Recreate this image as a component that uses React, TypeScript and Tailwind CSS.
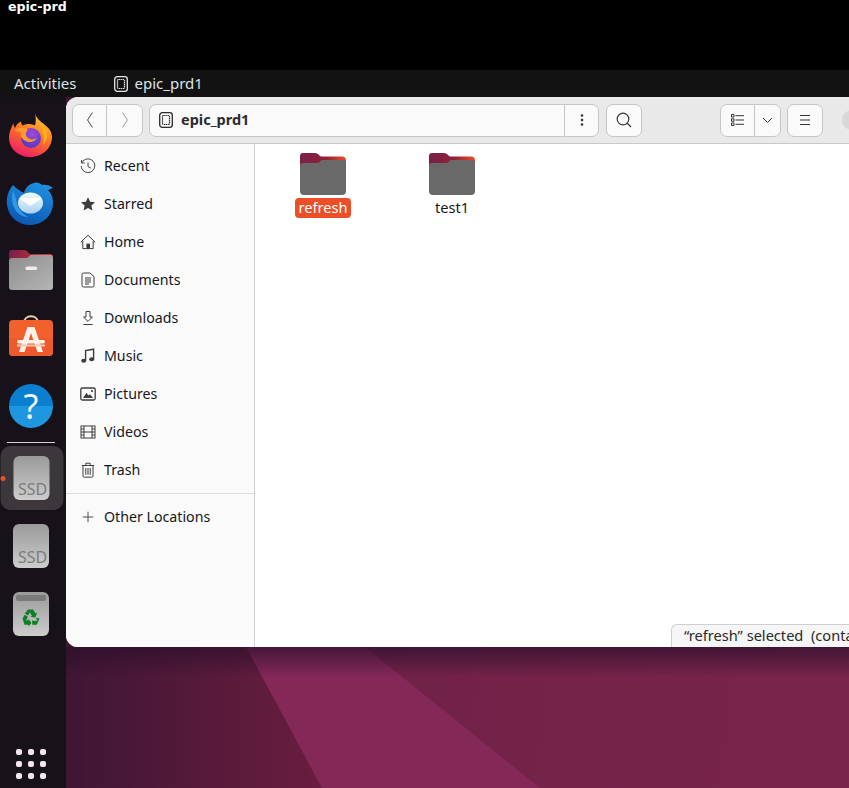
import { ReactNode } from 'react';

const font = { sans: 'font-["Noto_Sans",sans-serif]' };

const Glyph = ({ children, size = 16, className = '' }: { children: ReactNode; size?: number; className?: string }) => (
    <svg width={size} height={size} viewBox="0 0 16 16" fill="none" stroke="currentColor" strokeWidth="1" className={className}>
        {children}
    </svg>
);

const ChipIcon = ({ className = '' }: { className?: string }) => (
    <svg width="14" height="16" viewBox="0 0 14 16" fill="none" stroke="currentColor" className={className}>
        <rect x="0.7" y="0.7" width="12.6" height="14.6" rx="2.6" strokeWidth="1.3" />
        <rect x="3.5" y="3.5" width="7" height="9" rx="1" strokeWidth="1.2" strokeDasharray="1.4 0.6" />
    </svg>
);

const places: { label: string; icon: ReactNode }[] = [
    {
        label: 'Recent',
        icon: (
            <Glyph>
                <path d="M2 4.5A6.8 6.8 0 1 1 1.2 8" />
                <path d="M1.6 2v3h3M8 4.5V8.5l2.8 1.6" />
            </Glyph>
        ),
    },
    {
        label: 'Starred',
        icon: (
            <Glyph>
                <path d="M8 1.2l2.1 4.5 4.9.6-3.6 3.3 1 4.9L8 12.1l-4.4 2.4 1-4.9L1 6.3l4.9-.6z" fill="currentColor" stroke="none" />
            </Glyph>
        ),
    },
    {
        label: 'Home',
        icon: (
            <Glyph>
                <path d="M.8 8.2 8 1.2l7.2 7M2.8 7v7.6h10.4V7" />
                <rect x="6.4" y="9.6" width="3.6" height="5" fill="currentColor" stroke="none" />
            </Glyph>
        ),
    },
    {
        label: 'Documents',
        icon: (
            <Glyph>
                <path d="M2 2.5a1.5 1.5 0 0 1 1.500-1.500h6.500l4 3.500v9a1.500 1.500 0 0 1-1.500 1.500h-9A1.500 1.500 0 0 1 2 13.500z" />
                <path d="M5 6h6M5 8h6M5 10h6M5 12h4" />
            </Glyph>
        ),
    },
    {
        label: 'Downloads',
        icon: (
            <Glyph>
                <path d="M6 1.5h4V7h2.4L8 11.4 3.6 7H6zM3.4 14.5h9.2" />
            </Glyph>
        ),
    },
    {
        label: 'Music',
        icon: (
            <Glyph>
                <path d="M5.6 12.5V2.6l8-1.4v9.8" strokeWidth="1.4" />
                <ellipse cx="3.7" cy="12.8" rx="2.5" ry="2" fill="currentColor" stroke="none" />
                <ellipse cx="11.7" cy="11.3" rx="2.5" ry="2" fill="currentColor" stroke="none" />
            </Glyph>
        ),
    },
    {
        label: 'Pictures',
        icon: (
            <Glyph>
                <rect x="0.8" y="2" width="14.4" height="12" rx="1.5" strokeWidth="1.3" />
                <path d="M3 12l3.4-5 2.2 2.6 1.4-1.4 3 3.8z" fill="currentColor" stroke="none" />
                <circle cx="12" cy="5" r="1.1" fill="currentColor" stroke="none" />
            </Glyph>
        ),
    },
    {
        label: 'Videos',
        icon: (
            <Glyph>
                <rect x="1" y="2" width="14" height="12" />
                <path d="M4 2v12M12 2v12M4 8h8M1 5h3M1 8h3M1 11h3M12 5h3M12 8h3M12 11h3" />
            </Glyph>
        ),
    },
    {
        label: 'Trash',
        icon: (
            <Glyph>
                <path d="M1.8 3.5h12.4M5.8 3.5V1.2h4.4v2.3M3 3.5v10.3A1.4 1.4 0 0 0 4.4 15.2h7.2a1.4 1.4 0 0 0 1.4-1.4V3.5" />
                <path d="M5.8 6v6.8M8 6v6.8M10.2 6v6.8" />
            </Glyph>
        ),
    },
];

const FolderIcon = () => (
    <svg width="46" height="42" viewBox="0 0 46 42">
        <defs>
            <linearGradient id="folderTab" x1="0" y1="0" x2="1" y2="0">
                <stop offset="0%" stopColor="#7a1f48" />
                <stop offset="55%" stopColor="#8f2238" />
                <stop offset="100%" stopColor="#ef4a25" />
            </linearGradient>
        </defs>
        <path d="M3 0h12c2 0 3 1 4 2 1 1 2 1.500 3.500 1.500H42a4 4 0 0 1 4 4v8H0V3a3 3 0 0 1 3-3z" fill="url(#folderTab)" />
        <path d="M3 10h13c2 0 3-.6 4-1.600C21 7.400 22 7 23.500 7H43a3 3 0 0 1 3 3v28a4 4 0 0 1-4 4H4a4 4 0 0 1-4-4V13a3 3 0 0 1 3-3z" fill="#696969" />
    </svg>
);

const FileItem = ({ name, selected = false }: { name: string; selected?: boolean }) => (
    <div className="flex w-[58px] flex-col items-center">
        <FolderIcon />
        <span className={`mt-[3px] flex h-5 items-center rounded-[4px] px-[4px] text-[14.6px] ${selected ? 'bg-[#ea4f27] text-white' : 'text-[#15181d]'}`}>
            {name}
        </span>
    </div>
);

const Firefox = () => (
    <svg width="44" height="44" viewBox="0 0 44 44">
        <defs>
            <linearGradient id="ffBody" x1="0.75" y1="0" x2="0.3" y2="1">
                <stop offset="0%" stopColor="#ffd23c" />
                <stop offset="45%" stopColor="#ff7a1f" />
                <stop offset="100%" stopColor="#f0196a" />
            </linearGradient>
            <radialGradient id="ffGlobe" cx="0.55" cy="0.3" r="0.8">
                <stop offset="0%" stopColor="#a04cd8" />
                <stop offset="100%" stopColor="#4a33c8" />
            </radialGradient>
        </defs>
        <path d="M26 0c1 5 5 8 10 12 4 3 7 7 7 12 0 11-9.500 20-21.500 20S0 36 0 24.500C0 20 1.500 16.500 4.500 10c0 2 .5 4 1.500 5 1-3 3-5 6-6.500 0 2 .5 3 2 4 3-2 8-2 12 0C27 9 27 4 26 0z" fill="url(#ffBody)" />
        <circle cx="22" cy="25" r="10" fill="url(#ffGlobe)" />
        <path d="M6 17c4-3 9-3 13 0 -2 2-3 4-1 7 2 3 7 3 10 1-3 5-9 5-13 2-3-2-4-5-3-8-2-.5-4 0-6-2z" fill="#ff9a2c" />
        <path d="M28 9c7 2 11 8 10 16-1 3-2 5-4 7 2-8 0-17-6-23z" fill="#ffb01f" />
    </svg>
);

const Thunderbird = () => (
    <svg width="48" height="48" viewBox="0 0 48 48">
        <defs>
            <linearGradient id="tbBody" x1="0.7" y1="0" x2="0.3" y2="1">
                <stop offset="0%" stopColor="#1f8fe0" />
                <stop offset="100%" stopColor="#0a56b0" />
            </linearGradient>
            <linearGradient id="tbMail" x1="0" y1="0" x2="0" y2="1">
                <stop offset="0%" stopColor="#f4faff" />
                <stop offset="100%" stopColor="#a9d2f2" />
            </linearGradient>
        </defs>
        <path d="M7 7c-5 6-7 13-6 20 1.500 12 11 20 23 20s23-9 23-22c0-6-2-10-5-13l5-2c-3-3-8-4-11-3-2-2-5-3-8-2-5 1-9 5-10 10-4-2-7-4-11-8z" fill="url(#tbBody)" />
        <path d="M7 13c-2 7-1 15 4 21 3 3 7 5 11 5-6-4-10-8-11-14-1-4-2-8-4-12z" fill="#2f9be8" />
        <ellipse cx="24.500" cy="25" rx="12.500" ry="10.500" fill="url(#tbMail)" />
        <path d="M13 20l11.500 8L36 20" fill="#fff" />
    </svg>
);

const FilesApp = () => (
    <svg width="44" height="40" viewBox="0 0 44 40">
        <defs>
            <linearGradient id="filesTab" x1="0" y1="0" x2="1" y2="0">
                <stop offset="0%" stopColor="#7c1d4c" />
                <stop offset="100%" stopColor="#d83c2a" />
            </linearGradient>
            <linearGradient id="filesBody" x1="0" y1="0" x2="1" y2="1">
                <stop offset="0%" stopColor="#8d8d8d" />
                <stop offset="100%" stopColor="#b5b5b5" />
            </linearGradient>
        </defs>
        <path d="M3 0h12c2 0 3 1 4 2.500 1 1 2 1.500 3.500 1.500H41a3 3 0 0 1 3 3v8H0V3a3 3 0 0 1 3-3z" fill="url(#filesTab)" />
        <path d="M3 8h13c2 0 3-.6 4-1.600C21 5.400 22 5 23.500 5H41a3 3 0 0 1 3 3v29a3 3 0 0 1-3 3H3a3 3 0 0 1-3-3V11a3 3 0 0 1 3-3z" fill="url(#filesBody)" />
        <rect x="16.500" y="16.500" width="11.500" height="3.500" rx="1.500" fill="#f1eee9" />
    </svg>
);

const AppStore = () => (
    <svg width="44" height="44" viewBox="0 0 44 44">
        <path d="M15 10c0-9 14-9 14 0" fill="none" stroke="#f4d6a6" strokeWidth="2" />
        <rect x="0" y="7" width="44" height="36" rx="4" fill="#f2602c" />
        <path d="M0 25h44v14a4 4 0 0 1-4 4H4a4 4 0 0 1-4-4z" fill="#ee5a2d" />
        <path d="M18.500 14h7l8.500 25h-5.500L22 20l-6.500 19H10z" fill="#fdf1e8" />
        <rect x="8" y="27" width="28" height="3.500" rx="1.700" fill="#fdf1e8" />
        <rect x="8" y="31.500" width="28" height="2" fill="#f3c9b4" />
    </svg>
);

const HelpApp = () => (
    <div className="flex h-11 w-11 items-center justify-center rounded-full bg-gradient-to-b from-[#0a7fd0] from-50% to-[#1f97e0] to-50%">
        <span className={`text-[34px] leading-[44px] text-[#f4f8fc] ${font.sans}`}>?</span>
    </div>
);

const DriveApp = ({ kind }: { kind: 'ssd' | 'trash' }) => (
    <div className="relative flex h-11 w-9 flex-col items-center overflow-hidden rounded-[6px] bg-gradient-to-b from-[#9a9a9a] to-[#cdcdcd]">
        {kind === 'ssd' ? (
            <span className="absolute bottom-[3px] left-[5px] text-[16px] leading-none text-[#7c7c7c]">SSD</span>
        ) : (
            <>
                <div className="mt-[3px] h-[6px] w-[30px] rounded-[2px] bg-[#7a7a7a]" />
                <svg width="20" height="20" viewBox="0 0 20 20" className="mt-[7px]" fill="#0d7f24">
                    <path d="M7 1.500h5l2.500 4 1.800-1-2 5-5-.8 1.700-1L8.800 4.500 7 7.500 3.800 5.500z" />
                    <path d="M1.500 10.500l2.200-3.700 3.300 2-2 3.500h2.500v-1.500L10.500 15l-3 3.500v-1.800H3.500z" />
                    <path d="M18.500 10.500l-2.700 6.200H11.500v1.800L11 13l.5-1.500v1.200h5l-1.700-3z" />
                </svg>
            </>
        )}
    </div>
);

const Dock = () => (
    <aside className="flex w-[66px] shrink-0 flex-col items-center bg-[#17111a]">
        <div className="mt-[16px] -ml-[5px]"><Firefox /></div>
        <div className="mt-[21px] -ml-[6px]"><Thunderbird /></div>
        <div className="mt-[24px] -ml-[4px]"><FilesApp /></div>
        <div className="mt-[23px] -ml-[4px]"><AppStore /></div>
        <div className="mt-[27px] -ml-[4px]"><HelpApp /></div>
        <div className="mt-[14px] h-px w-[48px] -translate-x-[2px] bg-[#d4d0d2]" />
        <div className="relative mt-[3px] flex h-16 w-[63px] -translate-x-[1.500px] items-center justify-center rounded-[10px] bg-[#3b373b] pr-px">
            <DriveApp kind="ssd" />
            <div className="absolute left-0 top-[30px] h-[5px] w-[5px] rounded-full bg-[#e9512a]" />
        </div>
        <div className="mt-[14px] -ml-[4px]"><DriveApp kind="ssd" /></div>
        <div className="mt-[24px] -ml-[4px]"><DriveApp kind="trash" /></div>
        <div className="mt-[113px] -ml-[4px] grid grid-cols-3 gap-x-[6px] gap-y-[6px]">
            {Array.from({ length: 9 }).map((_, i) => (
                <div key={i} className="h-[6px] w-[6px] rounded-[2px] bg-[#f4e6ee]" />
            ))}
        </div>
    </aside>
);

const btn = 'flex h-[33px] items-center justify-center border border-[#c6c6c6] bg-[#fafafa] text-[#3a3a3a]';

const Toolbar = () => (
    <header className="flex h-[47px] items-center border-b border-[#c9c9c9] bg-[#e9e9e9] pl-[6px]">
        <div className={`${btn} w-[35px] rounded-l-[7px]`}>
            <svg width="10" height="18" viewBox="0 0 10 18" fill="none" stroke="#4a4a4a"><path d="M7.500 1.500 2.500 9l5 7.500" /></svg>
        </div>
        <div className={`${btn} -ml-px w-[37px] rounded-r-[7px]`}>
            <svg width="10" height="18" viewBox="0 0 10 18" fill="none" stroke="#9a9a9a"><path d="M2.500 1.500 7.500 9l-5 7.500" /></svg>
        </div>
        <div className={`${btn} ml-[6px] w-[416px] justify-start rounded-l-[7px] bg-[#f1f1f1] pl-[9px]`}>
            <ChipIcon className="text-[#2b2b2b]" />
            <span className="ml-2 text-[14.5px] font-bold text-[#2c2c2c]">epic_prd1</span>
        </div>
        <div className={`${btn} -ml-px w-[35px] rounded-r-[7px]`}>
            <svg width="4" height="12" viewBox="0 0 4 12" fill="#333"><circle cx="2" cy="1.500" r="1.300" /><circle cx="2" cy="6" r="1.300" /><circle cx="2" cy="10.500" r="1.300" /></svg>
        </div>
        <div className={`${btn} ml-[7px] w-[36px] rounded-[7px]`}>
            <svg width="16" height="16" viewBox="0 0 16 16" fill="none" stroke="#3a3a3a" strokeWidth="1.200"><circle cx="7" cy="7" r="5.800" /><path d="M11 11l4 4" /></svg>
        </div>
        <div className={`${btn} ml-[78px] w-[35px] rounded-l-[7px]`}>
            <svg width="13" height="12" viewBox="0 0 13 12" fill="none" stroke="#333"><path d="M.5.500h2.500v2.500H.5zM.5 4.800h2.500v2.500H.5zM.5 9h2.500v2.500H.5zM4.500 1.700H13M4.500 6H13M4.500 10.300H13" /></svg>
        </div>
        <div className={`${btn} -ml-px w-[27px] rounded-r-[7px]`}>
            <svg width="11" height="7" viewBox="0 0 11 7" fill="none" stroke="#333"><path d="M1 1l4.500 4.500L10 1" /></svg>
        </div>
        <div className={`${btn} ml-[6px] w-[36px] rounded-[7px]`}>
            <svg width="12" height="10" viewBox="0 0 12 10" fill="none" stroke="#333"><path d="M1 .500h10M1 5h10M1 9.500h10" /></svg>
        </div>
        <div className="ml-[19px] h-[20px] w-[20px] shrink-0 rounded-full bg-[#d8d8d8]" />
    </header>
);

const Sidebar = () => (
    <nav className="flex w-[189px] shrink-0 flex-col border-r border-[#d0d0d0] bg-[#fafafa] pt-[3px]">
        {places.map((p) => (
            <div key={p.label} className="flex h-[38px] items-center pl-[14px] text-[#15181d]">
                <span className="flex w-4 justify-center text-[#3d3d3d]">{p.icon}</span>
                <span className="ml-[8px] text-[14.2px]">{p.label}</span>
            </div>
        ))}
        <div className="mt-[4px] border-t border-[#dcdcdc]" />
        <div className="flex h-[46px] items-center pl-[14px] text-[#15181d]">
            <span className="flex w-4 justify-center text-[#3d3d3d]">
                <Glyph size={14}><path d="M8 2v12M2 8h12" /></Glyph>
            </span>
            <span className="ml-[8px] text-[14.2px]">Other Locations</span>
        </div>
    </nav>
);

const FilesWindow = () => (
    <div className="relative z-10 flex h-[550px] w-[800px] shrink-0 flex-col overflow-hidden rounded-l-[12px] bg-white">
        <Toolbar />
        <div className="flex flex-1">
            <Sidebar />
            <main className="relative flex flex-1 gap-[71px] bg-white pl-[39px] pt-[9px]">
                <FileItem name="refresh" selected />
                <FileItem name="test1" />
                <div className="absolute left-[416px] top-[480px] flex h-[23px] w-[300px] items-center whitespace-pre rounded-tl-[6px] border-l border-t border-[#cfcfcf] bg-[#f6f6f6] pl-[12px] text-[14.6px] text-[#2a2a2a]">
                    {'“refresh” selected  (containing 0 items)'}
                </div>
            </main>
        </div>
    </div>
);

const Wallpaper = () => (
    <svg className="absolute inset-0 h-full w-full" viewBox="0 0 783 691" preserveAspectRatio="none">
        <defs>
            <linearGradient id="wallLeft" x1="0" y1="0" x2="1" y2="0">
                <stop offset="0%" stopColor="#3f1634" />
                <stop offset="100%" stopColor="#6a1d3f" />
            </linearGradient>
            <linearGradient id="wallRight" x1="0" y1="0" x2="1" y2="0.100">
                <stop offset="0%" stopColor="#6a2044" />
                <stop offset="100%" stopColor="#78244b" />
            </linearGradient>
            <linearGradient id="wallShade" x1="0" y1="0" x2="0" y2="1">
                <stop offset="0%" stopColor="#2a0f2a" stopOpacity="0.7" />
                <stop offset="100%" stopColor="#2a0f2a" stopOpacity="0" />
            </linearGradient>
        </defs>
        <rect width="783" height="691" fill="url(#wallRight)" />
        <polygon points="0,0 255,0 256,691 0,691" fill="url(#wallLeft)" />
        <polygon points="180,550 299,550 474,691 256,691" fill="#842858" />
        <rect y="550" width="783" height="30" fill="url(#wallShade)" />
    </svg>
);

export default function App() {
    return (
        <div className={`flex h-[788px] w-[849px] flex-col overflow-hidden bg-black ${font.sans}`}>
            <div className="h-[70px] shrink-0 pl-[8px] font-['DejaVu_Sans',sans-serif] text-[12.6px] font-bold leading-[13px] text-white">
                epic-prd
            </div>
            <div className="flex h-[27px] shrink-0 items-center bg-[#121212] text-[15px] text-[#dfe3e8]">
                <span className="ml-[14px]">Activities</span>
                <ChipIcon className="ml-[37px] text-[#e8e8e8]" />
                <span className="ml-[7px]">epic_prd1</span>
            </div>
            <div className="flex flex-1 overflow-hidden">
                <Dock />
                <div className="relative flex-1 overflow-hidden">
                    <Wallpaper />
                    <FilesWindow />
                </div>
            </div>
        </div>
    );
}
